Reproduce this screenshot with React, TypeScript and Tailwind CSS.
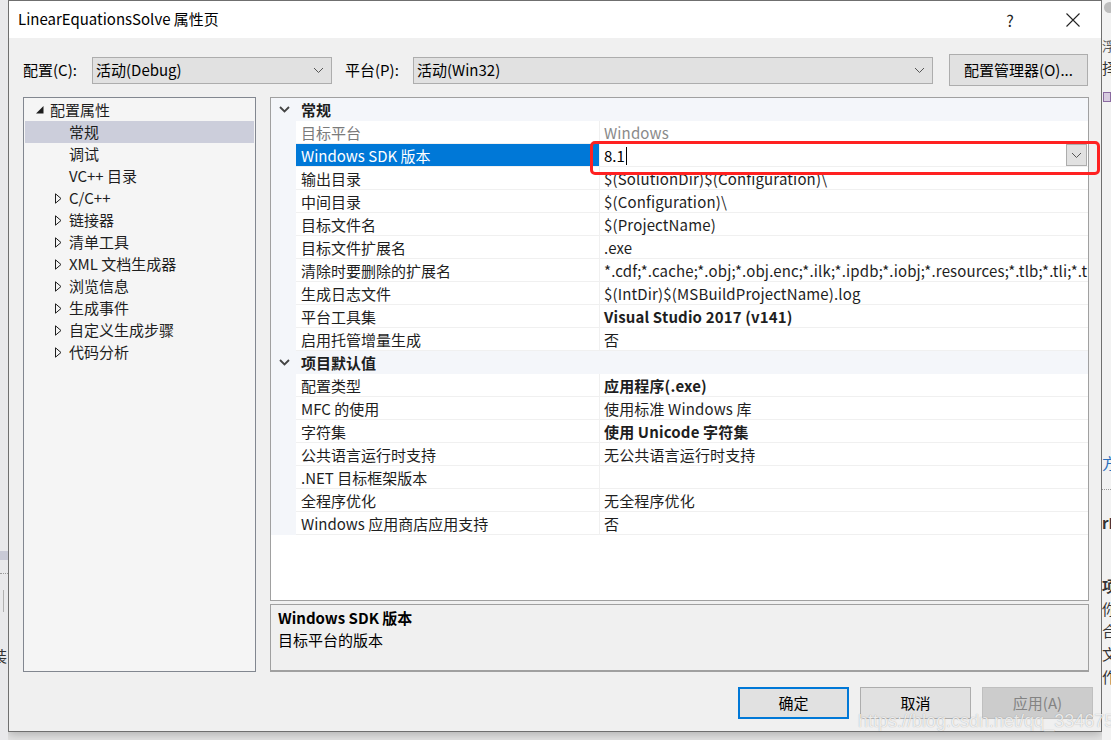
import React from 'react'

type Row = {
  name: string
  value: string
  bold?: boolean
  disabled?: boolean
  selected?: boolean
}

type Section = { title: string; rows: Row[] }

const sections: Section[] = [
  {
    title: '常规',
    rows: [
      { name: '目标平台', value: 'Windows', disabled: true },
      { name: 'Windows SDK 版本', value: '8.1', selected: true },
      { name: '输出目录', value: '$(SolutionDir)$(Configuration)\\' },
      { name: '中间目录', value: '$(Configuration)\\' },
      { name: '目标文件名', value: '$(ProjectName)' },
      { name: '目标文件扩展名', value: '.exe' },
      {
        name: '清除时要删除的扩展名',
        value:
          '*.cdf;*.cache;*.obj;*.obj.enc;*.ilk;*.ipdb;*.iobj;*.resources;*.tlb;*.tli;*.tlh;*.tmp;*.rsp;*.pgc;*.pgd',
      },
      { name: '生成日志文件', value: '$(IntDir)$(MSBuildProjectName).log' },
      { name: '平台工具集', value: 'Visual Studio 2017 (v141)', bold: true },
      { name: '启用托管增量生成', value: '否' },
    ],
  },
  {
    title: '项目默认值',
    rows: [
      { name: '配置类型', value: '应用程序(.exe)', bold: true },
      { name: 'MFC 的使用', value: '使用标准 Windows 库' },
      { name: '字符集', value: '使用 Unicode 字符集', bold: true },
      { name: '公共语言运行时支持', value: '无公共语言运行时支持' },
      { name: '.NET 目标框架版本', value: '' },
      { name: '全程序优化', value: '无全程序优化' },
      { name: 'Windows 应用商店应用支持', value: '否' },
    ],
  },
]

const tree: { label: string; level: 0 | 1; expander?: 'open' | 'closed'; selected?: boolean }[] = [
  { label: '配置属性', level: 0, expander: 'open' },
  { label: '常规', level: 1, selected: true },
  { label: '调试', level: 1 },
  { label: 'VC++ 目录', level: 1 },
  { label: 'C/C++', level: 1, expander: 'closed' },
  { label: '链接器', level: 1, expander: 'closed' },
  { label: '清单工具', level: 1, expander: 'closed' },
  { label: 'XML 文档生成器', level: 1, expander: 'closed' },
  { label: '浏览信息', level: 1, expander: 'closed' },
  { label: '生成事件', level: 1, expander: 'closed' },
  { label: '自定义生成步骤', level: 1, expander: 'closed' },
  { label: '代码分析', level: 1, expander: 'closed' },
]

function Chevron({ className = '' }: { className?: string }) {
  return (
    <svg width="11" height="7" viewBox="0 0 11 7" className={className}>
      <path d="M1 1 L5.5 5.5 L10 1" fill="none" stroke="currentColor" strokeWidth="1" />
    </svg>
  )
}

function Select({ text, width }: { text: string; width: string }) {
  return (
    <div
      className={`flex h-[27px] ${width} items-center justify-between border border-[#adadad] bg-[#e1e1e1] pl-[3px] pr-[7px] text-[15px] text-black`}
    >
      <span>{text}</span>
      <Chevron className="text-[#555]" />
    </div>
  )
}

function TreePanel() {
  return (
    <div className="h-[575px] w-[233px] border border-[#828790] bg-[#f5f5f5] px-px pt-[1px] text-[15px] text-[#1e1e1e]">
      {tree.map((t) => (
        <div
          key={t.label}
          className={`flex h-[22px] items-center ${t.selected ? 'bg-[#cccedb]' : ''}`}
        >
          <div className={`flex shrink-0 items-center justify-center ${t.level === 0 ? 'w-[23px] pl-[6px]' : 'w-[42px] pl-[24px]'}`}>
            {t.expander === 'open' && (
              <svg width="8" height="8" viewBox="0 0 8 8">
                <polygon points="0,7.5 7.5,7.5 7.5,0" fill="#1e1e1e" />
              </svg>
            )}
            {t.expander === 'closed' && (
              <svg width="7" height="11" viewBox="0 0 7 11">
                <polygon points="0.5,0.8 6,5.5 0.5,10.2" fill="none" stroke="#1e1e1e" strokeWidth="1" />
              </svg>
            )}
          </div>
          <span className="ml-[2px] whitespace-nowrap">{t.label}</span>
        </div>
      ))}
    </div>
  )
}

function PropertyGrid() {
  return (
    <div className="flex h-[504px] flex-col border border-[#a0a0a0] bg-white text-[15px]">
      {sections.map((s) => (
        <div key={s.title}>
          <div className="flex h-[23px] items-center bg-[#f4f6fa]">
            <div className="flex w-[25px] justify-center pl-[1px]">
              <svg width="11" height="7" viewBox="0 0 11 7">
                <path d="M1 1 L5.5 5.5 L10 1" fill="none" stroke="#444" strokeWidth="1.8" />
              </svg>
            </div>
            <span className="pl-[5px] pt-px font-bold text-[#1e1e1e]">{s.title}</span>
          </div>
          {s.rows.map((r) => (
            <div key={r.name} className="flex h-[23px]">
              <div className="w-[25px] shrink-0 bg-[#f4f6fa]" />
              <div
                className={`flex w-[304px] shrink-0 items-center border-b border-r border-[#f0f0f0] pl-[5px] pt-[2px] whitespace-nowrap ${
                  r.selected ? 'bg-[#0078d7] text-white' : r.disabled ? 'text-[#7a7a7a]' : 'text-[#1e1e1e]'
                }`}
              >
                {r.name}
              </div>
              {r.selected ? (
                <div className="flex min-w-0 flex-1 items-center border-b border-[#f0f0f0] pl-[4px] pr-px">
                  <span className="pt-[2px] text-black">{r.value}</span>
                  <span className="ml-px mt-[2px] h-[18px] w-px bg-black" />
                  <div className="ml-auto flex h-[22px] w-[21px] items-center justify-center border border-[#adadad] bg-[#e1e1e1]">
                    <Chevron className="text-[#555]" />
                  </div>
                </div>
              ) : (
                <div
                  className={`flex min-w-0 flex-1 items-center overflow-hidden border-b border-[#f0f0f0] pl-[4px] pt-[2px] whitespace-nowrap tracking-[0.15px] ${
                    r.bold ? 'font-bold' : ''
                  } ${r.disabled ? 'text-[#8a8a8a]' : 'text-[#1e1e1e]'}`}
                >
                  {r.value}
                </div>
              )}
            </div>
          ))}
        </div>
      ))}
    </div>
  )
}

function DialogButton({ label, primary, disabled }: { label: string; primary?: boolean; disabled?: boolean }) {
  return (
    <div
      className={`flex h-[32px] w-[111px] items-center justify-center text-[15px] ${
        primary
          ? 'border-2 border-[#0078d7] bg-[#e1e1e1] text-black'
          : disabled
            ? 'border border-[#bfbfbf] bg-[#cccccc] text-[#838383]'
            : 'border border-[#adadad] bg-[#e1e1e1] text-black'
      }`}
    >
      {label}
    </div>
  )
}

export default function App() {
  return (
    <div className="relative flex h-[740px] w-[1111px] overflow-hidden bg-[#e4e4e4] font-['Noto_Sans_CJK_SC','Noto_Sans',sans-serif]">
      {/* desktop behind, left */}
      <div className="relative w-[8px] shrink-0 bg-[#e9e9eb]">
        <div className="absolute top-[551px] h-[9px] w-full bg-[#c9cad6]" />
        <div className="absolute top-[573px] h-px w-full border-t border-dotted border-[#9a9a9a]" />
        <div className="absolute left-[3px] top-[590px] h-[22px] w-px bg-[#b0b0b0]" />
        <div className="absolute top-[645px] -left-[8px] text-[15px] text-[#333]">装</div>
      </div>

      {/* dialog */}
      <div className="flex h-[732px] w-[1094px] shrink-0 flex-col border border-[#6f6f6f] bg-[#f0f0f0] shadow-[0_2px_10px_rgba(0,0,0,0.25)]">
        <div className="flex h-[37px] shrink-0 items-center bg-white text-[15px] text-black">
          <span className="pl-[9px]">LinearEquationsSolve 属性页</span>
          <span className="ml-auto w-[46px] text-center text-[16px] text-[#222]">?</span>
          <div className="flex w-[68px] items-center justify-center pl-[12px]">
            <svg width="14" height="14" viewBox="0 0 14 14">
              <path d="M0.5 0.5 L13.5 13.5 M13.5 0.5 L0.5 13.5" stroke="#222" strokeWidth="1.1" />
            </svg>
          </div>
        </div>

        <div className="flex items-center pl-[14px] pt-[16px] text-[15px] text-black">
          <span className="w-[69px]">配置(C):</span>
          <Select text="活动(Debug)" width="w-[240px]" />
          <span className="ml-[13px] w-[68px]">平台(P):</span>
          <Select text="活动(Win32)" width="w-[520px]" />
          <div className="ml-[16px] flex h-[32px] w-[139px] items-center justify-center border border-[#adadad] bg-[#e1e1e1]">
            配置管理器(O)...
          </div>
        </div>

        <div className="flex gap-[14px] pl-[14px] pt-[11px]">
          <TreePanel />
          <div className="flex w-[819px] flex-col gap-[3px]">
            <PropertyGrid />
            <div className="h-[68px] border border-b-2 border-[#a0a0a0] bg-[#f0f0f0] px-[7px] pt-[2px] text-[15px] text-black">
              <div className="font-bold leading-[22px]">Windows SDK 版本</div>
              <div className="leading-[22px]">目标平台的版本</div>
            </div>
          </div>
        </div>

        <div className="flex justify-end gap-[11px] pr-[8px] pt-[15px]">
          <DialogButton label="确定" primary />
          <DialogButton label="取消" />
          <DialogButton label="应用(A)" disabled />
        </div>
      </div>

      {/* desktop behind, right */}
      <div className="relative flex-1 overflow-hidden bg-[#f2f2f2] text-[15px] text-[#333]">
        <div className="absolute left-[2px] top-[2px] h-[11px] w-[11px] rounded-full bg-[#bdbdbd]" />
        <div className="absolute left-0 top-[36px] whitespace-nowrap text-[13px] text-[#555]">浮泛</div>
        <div className="absolute left-0 top-[57px] whitespace-nowrap">择</div>
        <div className="absolute left-[1px] top-[92px] h-[10px] w-[8px] border border-[#8a6aa0] bg-[#d8cce0]" />
        <div className="absolute left-0 top-[452px] whitespace-nowrap text-[#2a6ebb]">方案</div>
        <div className="absolute left-0 top-[489px] h-px w-full border-t border-dotted border-[#999]" />
        <div className="absolute left-0 top-[512px] whitespace-nowrap font-bold">rE</div>
        <div className="absolute left-0 top-[575px] whitespace-nowrap font-bold">项</div>
        <div className="absolute left-0 top-[598px] whitespace-nowrap">你</div>
        <div className="absolute left-0 top-[620px] whitespace-nowrap">合</div>
        <div className="absolute left-0 top-[643px] whitespace-nowrap">文</div>
        <div className="absolute left-0 top-[666px] whitespace-nowrap">作</div>
      </div>

      {/* red annotation */}
      <div className="pointer-events-none absolute left-[590px] top-[141px] h-[34px] w-[510px] rounded-[5px] border-[3px] border-[#ff2121]" />

      {/* watermark */}
      <div className="pointer-events-none absolute left-[858px] top-[708px] whitespace-nowrap font-['Liberation_Sans',sans-serif] text-[18px] text-white/80 [text-shadow:0_0_1px_rgba(0,0,0,0.35)]">
        https://blog.csdn.net/qq_33467504
      </div>
    </div>
  )
}
